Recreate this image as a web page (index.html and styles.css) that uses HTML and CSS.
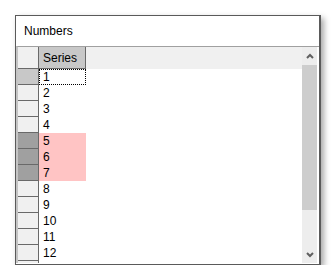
FILE: index.html
```html
<!DOCTYPE html>
<html lang="en">
<head>
    <meta charset="UTF-8">
    <title>Numbers</title>
    <link rel="stylesheet" href="styles.css">
</head>
<body>
    <div class="window">
        <div class="title">Numbers</div>
        <div class="grid">
            <div class="table">
                <div class="row head">
                    <div class="rh corner"></div>
                    <div class="col-head">Series</div>
                </div>
                <div class="row"><div class="rh current"></div><div class="cell focus">1</div></div>
                <div class="row"><div class="rh"></div><div class="cell">2</div></div>
                <div class="row"><div class="rh"></div><div class="cell">3</div></div>
                <div class="row"><div class="rh"></div><div class="cell">4</div></div>
                <div class="row"><div class="rh selected"></div><div class="cell marked">5</div></div>
                <div class="row"><div class="rh selected"></div><div class="cell marked">6</div></div>
                <div class="row"><div class="rh selected"></div><div class="cell marked">7</div></div>
                <div class="row"><div class="rh"></div><div class="cell">8</div></div>
                <div class="row"><div class="rh"></div><div class="cell">9</div></div>
                <div class="row"><div class="rh"></div><div class="cell">10</div></div>
                <div class="row"><div class="rh"></div><div class="cell">11</div></div>
                <div class="row"><div class="rh"></div><div class="cell">12</div></div>
                <div class="row"><div class="rh"></div></div>
            </div>
            <div class="scrollbar">
                <div class="arrow up">
                    <svg width="8" height="6" viewBox="0 0 8 6"><polyline points="1,5 4,2 7,5" fill="none" stroke="#606060" stroke-width="2"/></svg>
                </div>
                <div class="thumb"></div>
                <div class="track"></div>
                <div class="arrow down">
                    <svg width="8" height="6" viewBox="0 0 8 6"><polyline points="1,1 4,4 7,1" fill="none" stroke="#606060" stroke-width="2"/></svg>
                </div>
            </div>
        </div>
    </div>
</body>
</html>
```

FILE: styles.css
```css
body {
    margin: 0;
    background: #fff;
    font-family: "Liberation Sans", Arial, sans-serif;
    font-size: 12px;
    color: #000;
}
.window {
    margin: 15px 0 0 15px;
    width: 303px;
    height: 248px;
    border: 1px solid #5a5a5a;
    border-right-width: 2px;
    background: #fff;
    box-shadow: 3px 3px 6px rgba(0, 0, 0, 0.35);
    display: flex;
    flex-direction: column;
}
.title {
    height: 30px;
    line-height: 30px;
    padding-left: 8px;
    flex: none;
}
.grid {
    height: 216px;
    border-top: 1px solid #a0a0a0;
    border-left: 2px solid #c4c4c4;
    display: flex;
    overflow: hidden;
}
.table {
    flex: 1;
    overflow: hidden;
}
.row {
    display: flex;
    height: 16px;
}
.row.head {
    height: 22px;
    background: #f0f0f0;
}
.rh {
    width: 20px;
    flex: none;
    background: #f0f0f0;
    border-right: 1px solid #696969;
    border-bottom: 1px solid #696969;
}
.rh.current {
    background: #c8c8c8;
}
.rh.selected {
    background: #a0a0a0;
}
.col-head {
    width: 42px;
    padding-left: 4px;
    background: #c8c8c8;
    border-right: 1px solid #696969;
    border-bottom: 1px solid #696969;
    line-height: 22px;
}
.cell {
    width: 47px;
    padding-left: 4px;
    line-height: 16px;
    height: 16px;
    box-sizing: border-box;
}
.cell.marked {
    background: #ffc4c4;
}
.cell.focus {
    outline: 1px dotted #000;
    outline-offset: -1px;
}
.scrollbar {
    width: 15px;
    flex: none;
    margin-right: 2px;
    background: #ededed;
    display: flex;
    flex-direction: column;
}
.arrow {
    height: 17px;
    display: flex;
    align-items: center;
    justify-content: center;
    flex: none;
}
.thumb {
    height: 145px;
    margin-top: 1px;
    background: #cdcdcd;
    flex: none;
}
.track {
    flex: 1;
}
```
